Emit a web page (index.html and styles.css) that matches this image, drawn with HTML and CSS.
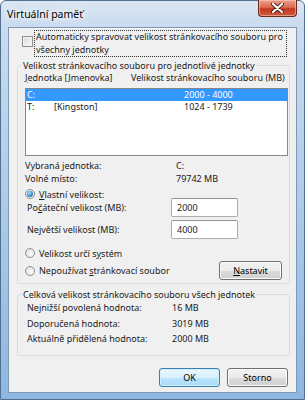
FILE: index.html
```html
<!DOCTYPE html>
<html lang="cs">
<head>
    <meta charset="UTF-8">
    <title>Virtuální paměť</title>
    <link rel="stylesheet" href="styles.css">
</head>
<body>
<div class="window">
    <!-- title bar -->
    <div class="titlebar">
        <span class="title">Virtuální paměť</span>
        <div class="close">
            <svg width="13" height="10" viewBox="0 0 13 10">
                <path d="M2 1 L11 9 M11 1 L2 9" stroke="#4a2018" stroke-width="4" stroke-linecap="round"/>
                <path d="M2 1 L11 9 M11 1 L2 9" stroke="#fff" stroke-width="2.2" stroke-linecap="round"/>
            </svg>
        </div>
    </div>

    <div class="client">
        <div class="auto">
            <span class="check"></span>
            <span class="auto-text">Automaticky spravovat velikost stránkovacího souboru pro<br>všechny jednotky</span>
        </div>

        <fieldset class="group drives">
            <legend>Velikost stránkovacího souboru pro jednotlivé jednotky</legend>
            <div class="cols">
                <span class="col-drive"><u>J</u>ednotka [Jmenovka]</span>
                <span>Velikost stránkovacího souboru (MB)</span>
            </div>
            <div class="listbox">
                <div class="item selected"><span class="c1">C:</span><span class="c2"></span><span>2000 - 4000</span></div>
                <div class="item"><span class="c1">T:</span><span class="c2">[Kingston]</span><span>1024 - 1739</span></div>
            </div>
            <div class="info">
                <span>Vybraná jednotka:</span><span>C:</span>
                <span>Volné místo:</span><span>79742 MB</span>
            </div>
            <div class="radio-row custom"><span class="radio on"></span><span><u>V</u>lastní velikost:</span></div>
            <div class="field first"><span class="field-label">Po<u>č</u>áteční velikost (MB):</span><div class="input">2000</div></div>
            <div class="field"><span class="field-label">Ne<u>j</u>větší velikost (MB):</span><div class="input">4000</div></div>
            <div class="radio-row system"><span class="radio"></span><span>Velikost určí s<u>y</u>stém</span></div>
            <div class="last-row">
                <div class="radio-row"><span class="radio"></span><span>Nepoužívat <u>s</u>tránkovací soubor</span></div>
                <div class="btn set"><u>N</u>astavit</div>
            </div>
        </fieldset>

        <fieldset class="group totals">
            <legend>Celková velikost stránkovacího souboru všech jednotek</legend>
            <div class="totals-grid">
                <span>Nejnižší povolená hodnota:</span><span>16 MB</span>
                <span>Doporučená hodnota:</span><span>3019 MB</span>
                <span>Aktuálně přidělená hodnota:</span><span>2000 MB</span>
            </div>
        </fieldset>

        <div class="buttons">
            <div class="btn default">OK</div>
            <div class="btn">Storno</div>
        </div>
    </div>
</div>
</body>
</html>
```

FILE: styles.css
```css
body {
    margin: 0;
    font-family: "Noto Sans", "Open Sans", sans-serif;
    font-size: 9px;
    color: #1a1a1a;
    white-space: nowrap;
}
u {
    text-decoration-thickness: 1px;
    text-underline-offset: 1px;
}
.window {
    width: 305px;
    height: 400px;
    box-sizing: border-box;
    border: 1px solid #50708f;
    border-radius: 6px 6px 0 0;
    background: linear-gradient(#dbe6f2 0, #c9dbee 26px, #a8c7e7 60%, #8db7e0 100%);
    padding: 0 7px 6px 7px;
    display: flex;
    flex-direction: column;
}
.titlebar {
    height: 26px;
    display: flex;
    justify-content: space-between;
    align-items: flex-start;
}
.title {
    font-size: 10.5px;
    line-height: 14px;
    padding-top: 6px;
    margin-left: -1px;
    color: #000;
    text-shadow: 0 0 6px #fff, 0 0 3px #fff, 0 0 10px #fff;
}
.close {
    width: 39px;
    height: 17px;
    margin-top: -1px;
    box-sizing: border-box;
    border: 1px solid #6b2a1c;
    border-top: none;
    border-radius: 0 0 4px 4px;
    background: linear-gradient(#eba08c 0, #dc6d52 45%, #c23a22 55%, #cf5a3c 100%);
    box-shadow: inset 0 0 0 1px rgba(255, 220, 210, 0.5);
    display: flex;
    align-items: center;
    justify-content: center;
}
.client {
    flex: 1;
    background: #f0f0f0;
    border: 1px solid #7d98b4;
    display: flex;
    flex-direction: column;
}

/* auto checkbox */
.auto {
    display: flex;
    align-items: flex-start;
    margin: 2px 0 0 13px;
}
.check {
    width: 11px;
    height: 11px;
    box-sizing: border-box;
    margin-top: 6px;
    margin-right: 1px;
    border: 1px solid #8e8f8f;
    background: linear-gradient(135deg, #d8d8d8, #fbfbfb);
    box-shadow: inset 0 0 0 1px #f3f3f3;
}
.auto-text {
    border: 1px dotted #333;
    padding: 0 3px 0 1px;
    line-height: 12.5px;
}

/* group boxes */
.group {
    margin: 2px 6px 0 8px;
    border: 1px solid #d5dfe5;
    border-radius: 3px;
    padding: 0 1px 3px 7px;
    min-width: 0;
}
.group legend {
    padding: 0 1px;
    margin-left: -3px;
    line-height: 13px;
}
.cols {
    display: flex;
    line-height: 12px;
}
.col-drive {
    width: 106px;
}
.listbox {
    margin-top: 4px;
    height: 68px;
    box-sizing: border-box;
    border: 1px solid #828790;
    background: #fff;
}
.item {
    display: flex;
    height: 12px;
    line-height: 12px;
    padding-left: 1px;
}
.item.selected {
    background: #3399ff;
    color: #fff;
}
.c1 {
    width: 27px;
}
.c2 {
    width: 130px;
}
.info {
    display: grid;
    grid-template-columns: 151px auto;
    line-height: 13px;
    margin-top: 3px;
}
.radio-row {
    display: flex;
    align-items: center;
    height: 12px;
}
.radio-row.custom {
    margin-top: 3px;
}
.radio-row.system {
    margin-top: 8px;
}
.radio {
    width: 10px;
    height: 10px;
    box-sizing: border-box;
    border-radius: 50%;
    border: 1px solid #8e8f8f;
    background: radial-gradient(circle at 65% 65%, #fdfdfd, #d9d9d9);
    margin-right: 4px;
    display: flex;
    align-items: center;
    justify-content: center;
}
.radio.on::after {
    content: "";
    width: 6px;
    height: 6px;
    border-radius: 50%;
    background: radial-gradient(circle at 40% 35%, #b6ecff 0, #3f9ad8 45%, #155c9e 100%);
}
.field {
    display: flex;
    align-items: center;
    margin-top: 3px;
}
.field.first {
    margin-top: -2px;
}
.field-label {
    width: 144px;
    padding-left: 2px;
}
.input {
    width: 67px;
    height: 19px;
    box-sizing: border-box;
    border: 1px solid #abadb3;
    border-top-color: #8e9197;
    border-radius: 2px;
    background: #fff;
    padding-left: 5px;
    line-height: 17px;
}
.last-row {
    display: flex;
    justify-content: space-between;
    align-items: center;
    margin-top: 2px;
    padding-right: 6px;
}

/* buttons */
.btn {
    width: 63px;
    height: 19px;
    box-sizing: border-box;
    border: 1px solid #707070;
    border-radius: 3px;
    background: linear-gradient(#f2f2f2 0, #ebebeb 50%, #dddddd 50%, #cfcfcf 100%);
    box-shadow: inset 0 0 0 1px #fcfcfc;
    display: flex;
    align-items: center;
    justify-content: center;
    color: #000;
}
.btn.default {
    border-color: #3c7fb1;
    background: linear-gradient(#eaf6fd 0, #d9f0fc 50%, #bee6fd 50%, #a7d9f5 100%);
    box-shadow: inset 0 0 0 1px #cfeeff;
}
.totals {
    margin-top: 4px;
    padding: 0 1px 8px 9px;
}
.totals legend {
    margin-left: -5px;
}
.totals-grid {
    display: grid;
    grid-template-columns: 145px auto;
    line-height: 15.5px;
    margin-top: -1px;
}
.buttons {
    display: flex;
    justify-content: flex-end;
    gap: 7px;
    margin: 12px 8px 0 0;
}
.buttons .btn {
    width: 61px;
}
```
